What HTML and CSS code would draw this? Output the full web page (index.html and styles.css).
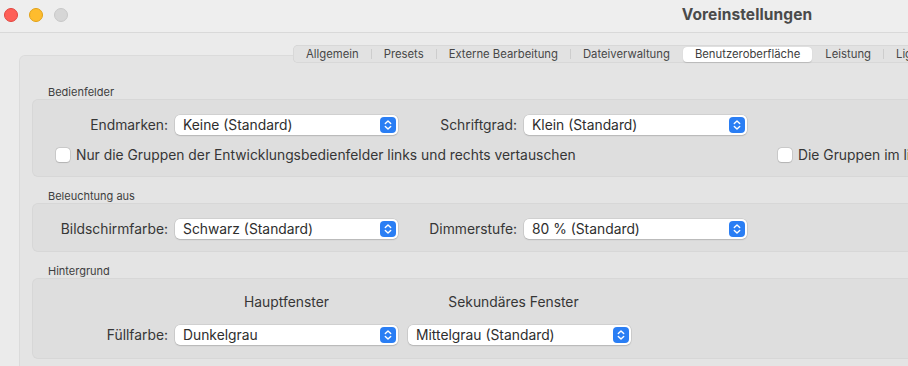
FILE: index.html
```html
<!DOCTYPE html>
<html lang="de">
<head>
<meta charset="utf-8">
<title>Voreinstellungen</title>
<link rel="stylesheet" href="styles.css">
</head>
<body>
<div class="window">
  <header class="titlebar">
    <div class="lights">
      <span class="light red"></span>
      <span class="light yellow"></span>
      <span class="light gray"></span>
    </div>
    <div class="title">Voreinstellungen</div>
    <div></div>
  </header>

  <main class="content">
    <section class="panel">
      <nav class="tabs">
        <span class="tab">Allgemein</span><span class="sep"></span>
        <span class="tab">Presets</span><span class="sep"></span>
        <span class="tab">Externe Bearbeitung</span><span class="sep"></span>
        <span class="tab">Dateiverwaltung</span><span class="sep off"></span>
        <span class="tab active">Benutzeroberfläche</span><span class="sep off"></span>
        <span class="tab">Leistung</span><span class="sep"></span>
        <span class="tab">Lightroom Sync</span>
      </nav>

      <div class="section-label first">Bedienfelder</div>
      <div class="group g1">
        <div class="form-row">
          <span class="label">Endmarken:</span>
          <div class="popup"><span>Keine (Standard)</span>
            <svg class="stepper" viewBox="0 0 16 16"><rect width="16" height="16" rx="4"/><path d="M5.3 6.6 8 4 10.7 6.6M5.3 9.4 8 12 10.7 9.4"/></svg>
          </div>
          <span class="label">Schriftgrad:</span>
          <div class="popup"><span>Klein (Standard)</span>
            <svg class="stepper" viewBox="0 0 16 16"><rect width="16" height="16" rx="4"/><path d="M5.3 6.6 8 4 10.7 6.6M5.3 9.4 8 12 10.7 9.4"/></svg>
          </div>
        </div>
        <div class="check-row">
          <label class="check wide"><span class="box"></span><span>Nur die Gruppen der Entwicklungsbedienfelder links und rechts vertauschen</span></label>
          <label class="check"><span class="box"></span><span>Die Gruppen im linken Bedienfeld vertauschen</span></label>
        </div>
      </div>

      <div class="section-label">Beleuchtung aus</div>
      <div class="group g2">
        <div class="form-row">
          <span class="label">Bildschirmfarbe:</span>
          <div class="popup"><span>Schwarz (Standard)</span>
            <svg class="stepper" viewBox="0 0 16 16"><rect width="16" height="16" rx="4"/><path d="M5.3 6.6 8 4 10.7 6.6M5.3 9.4 8 12 10.7 9.4"/></svg>
          </div>
          <span class="label">Dimmerstufe:</span>
          <div class="popup"><span>80 % (Standard)</span>
            <svg class="stepper" viewBox="0 0 16 16"><rect width="16" height="16" rx="4"/><path d="M5.3 6.6 8 4 10.7 6.6M5.3 9.4 8 12 10.7 9.4"/></svg>
          </div>
        </div>
      </div>

      <div class="section-label">Hintergrund</div>
      <div class="group g3">
        <div class="bg-grid">
          <span></span>
          <span class="col-head">Hauptfenster</span>
          <span class="col-head second">Sekundäres Fenster</span>
          <span class="label">Füllfarbe:</span>
          <div class="popup"><span>Dunkelgrau</span>
            <svg class="stepper" viewBox="0 0 16 16"><rect width="16" height="16" rx="4"/><path d="M5.3 6.6 8 4 10.7 6.6M5.3 9.4 8 12 10.7 9.4"/></svg>
          </div>
          <div class="popup end"><span>Mittelgrau (Standard)</span>
            <svg class="stepper" viewBox="0 0 16 16"><rect width="16" height="16" rx="4"/><path d="M5.3 6.6 8 4 10.7 6.6M5.3 9.4 8 12 10.7 9.4"/></svg>
          </div>
        </div>
      </div>
    </section>
  </main>
</div>
</body>
</html>
```

FILE: styles.css
```css
html, body {
  margin: 0;
  padding: 0;
  overflow: hidden;
  background: #ececec;
}

body {
  font-family: "Inter", "Noto Sans", "Liberation Sans", sans-serif;
  color: #333;
  -webkit-font-smoothing: antialiased;
}

.window {
  width: 1494px;
  height: 366px;
  overflow: hidden;
  background: #ebebeb;
}

/* Title bar */
.titlebar {
  height: 32px;
  border-bottom: 1px solid #d9d9d9;
  background: #eeeeee;
  display: grid;
  grid-template-columns: 1fr auto 1fr;
  align-items: center;
}

.lights {
  display: flex;
  gap: 11px;
  padding-left: 4px;
  margin-top: -2px;
}

.light {
  width: 14px;
  height: 14px;
  border-radius: 50%;
  box-sizing: border-box;
}

.light.red { background: #fe5f57; border: 0.5px solid #e2463f; }
.light.yellow { background: #febc2e; border: 0.5px solid #e1a116; }
.light.gray { background: #d6d6d6; border: 0.5px solid #c8c8c8; }

.title {
  font-size: 15.5px;
  font-weight: 700;
  color: #4a4a4a;
  letter-spacing: 0.1px;
  margin-top: -4px;
}

/* Content */
.content {
  padding-top: 22px;
}

.panel {
  margin-left: 19px;
  width: 1456px;
  height: 400px;
  background: #e4e4e4;
  border-radius: 6px;
  box-shadow: inset 0 0 0 1px rgba(0, 0, 0, 0.035);
  padding: 0 13px;
  box-sizing: border-box;
  display: flow-root;
}

/* Segmented control */
.tabs {
  display: flex;
  width: fit-content;
  align-items: center;
  margin-top: -10px;
  margin-left: 261px;
  height: 18px;
  padding: 0 1px;
  box-sizing: border-box;
  background: #e2e2e2;
  border-radius: 5px;
  box-shadow: inset 0 0 0 0.5px rgba(0, 0, 0, 0.09);
  font-size: 11.3px;
  color: #474747;
}

.tab {
  height: 15px;
  line-height: 15px;
  padding: 0 12px;
  white-space: nowrap;
  border-radius: 4px;
}

.tab.active {
  background: #ffffff;
  color: #404040;
  box-shadow: 0 0.5px 1px rgba(0, 0, 0, 0.15);
}

.sep {
  width: 1px;
  height: 10px;
  background: #cdcdcd;
}

.sep.off {
  background: transparent;
}

/* Sections */
.section-label {
  font-size: 11px;
  line-height: 14px;
  height: 14px;
  color: #3e3e3e;
  padding-left: 16px;
  margin-top: 12px;
}

.section-label.first {
  margin-top: 22px;
}

.group {
  background: #dedede;
  border-radius: 6px;
  box-shadow: inset 0 0 0 1px rgba(0, 0, 0, 0.03);
}

.g1 { padding: 16px 0 14px; }
.g2 { padding: 16px 0 13px; }
.g3 { padding: 16px 0 14px; }

.form-row {
  display: grid;
  grid-template-columns: 136px 223px 112px 223px;
  column-gap: 7px;
  align-items: center;
  height: 20px;
}

.label {
  text-align: right;
  font-size: 13.85px;
  color: #363636;
  white-space: nowrap;
}

.popup {
  height: 20px;
  background: #ffffff;
  border-radius: 5px;
  box-shadow: 0 0 0 0.5px rgba(0, 0, 0, 0.13), 0 1px 1.5px rgba(0, 0, 0, 0.12);
  display: flex;
  align-items: center;
  justify-content: space-between;
  padding: 0 2px 0 8px;
  box-sizing: border-box;
  font-size: 13.85px;
  color: #2e2e2e;
  white-space: nowrap;
}

.stepper {
  width: 16px;
  height: 16px;
  flex: none;
}

.stepper rect {
  fill: #2a7ef4;
}

.stepper path {
  fill: none;
  stroke: #ffffff;
  stroke-width: 1.4;
  stroke-linecap: round;
  stroke-linejoin: round;
}

/* Checkboxes */
.check-row {
  display: flex;
  align-items: center;
  height: 16px;
  margin-top: 12px;
  padding-left: 24px;
}

.check {
  display: flex;
  align-items: center;
  gap: 6px;
  font-size: 13.85px;
  color: #363636;
  white-space: nowrap;
}

.check.wide {
  width: 722px;
  flex: none;
}

.box {
  width: 14px;
  height: 14px;
  background: #ffffff;
  border-radius: 3.5px;
  box-shadow: 0 0 0 0.5px rgba(0, 0, 0, 0.16), 0 0.5px 1px rgba(0, 0, 0, 0.12);
  flex: none;
}

/* Background grid */
.bg-grid {
  display: grid;
  grid-template-columns: 136px 223px 226px;
  column-gap: 7px;
  row-gap: 15px;
  align-items: center;
}

.col-head {
  font-size: 13.85px;
  line-height: 16px;
  color: #363636;
  text-align: center;
  white-space: nowrap;
}

.col-head.second {
  padding-right: 9px;
}

.popup.end {
  width: 223px;
  justify-self: end;
}
```
